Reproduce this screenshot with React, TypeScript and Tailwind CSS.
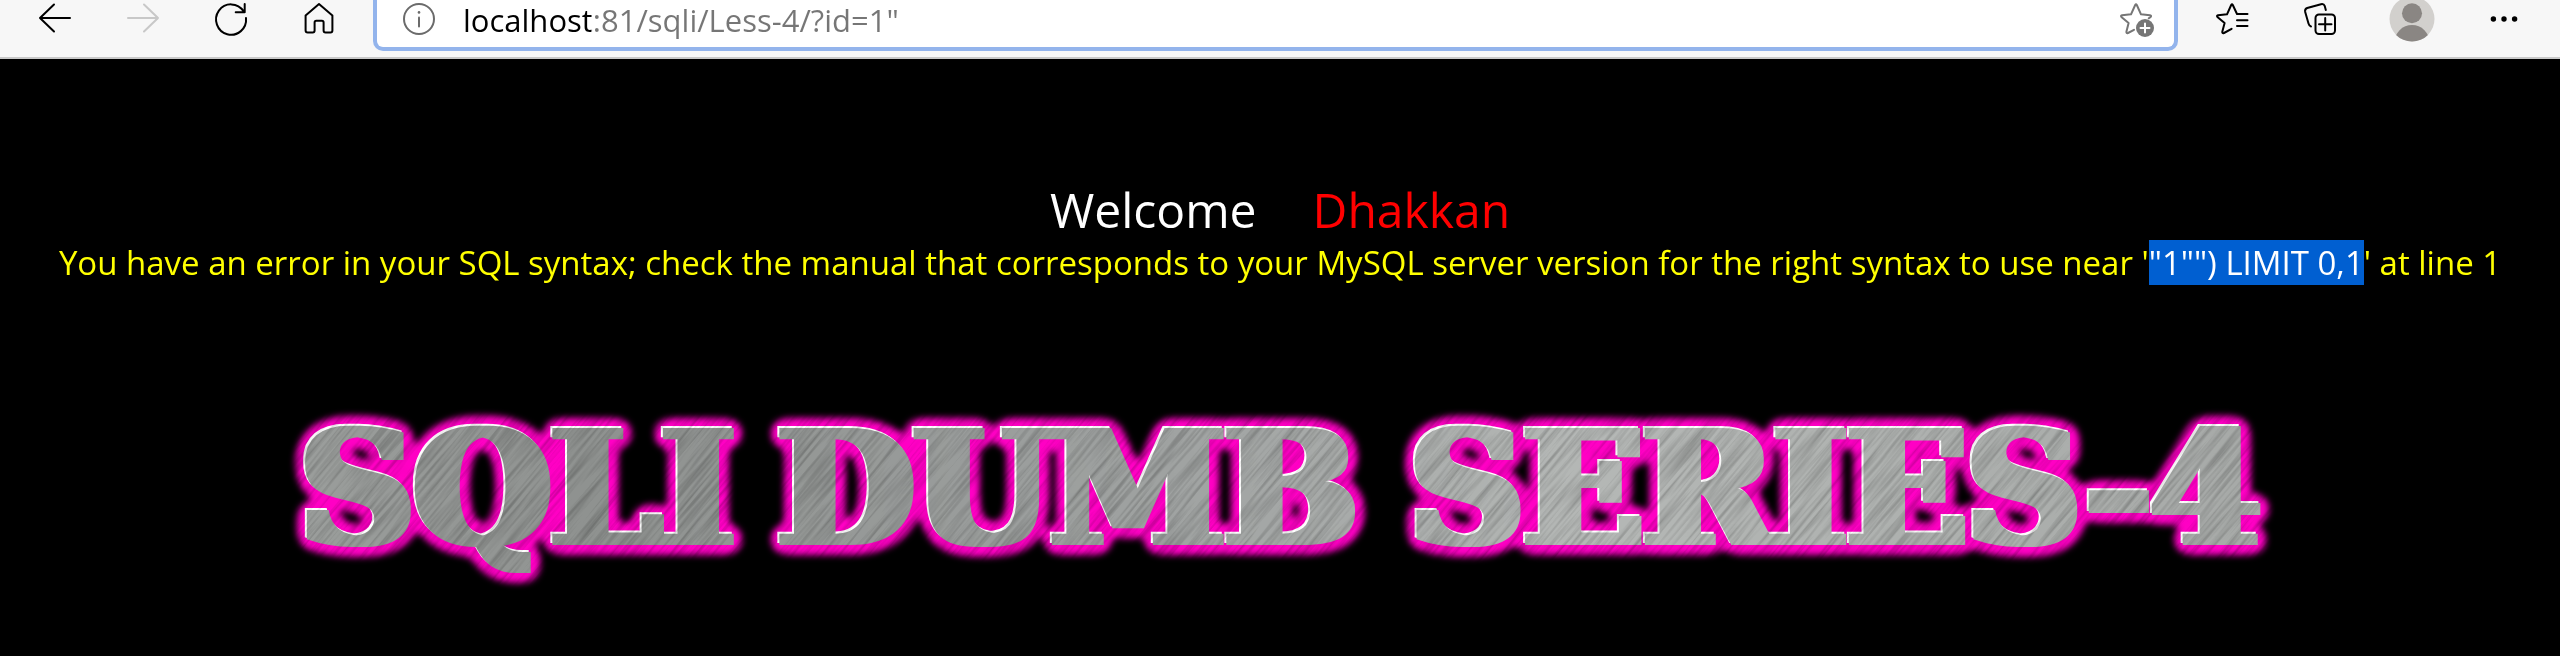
import type { ReactNode } from "react";

function ToolButton({ label, wide, disabled, children }: { label: string; wide?: boolean; disabled?: boolean; children: ReactNode }) {
  return (
    <button
      type="button"
      aria-label={label}
      disabled={disabled}
      className={`flex h-[38px] shrink-0 items-center justify-center ${wide ? "w-24" : "w-[88px]"} ${disabled ? "text-[#c8c8c8]" : "text-black"}`}
    >
      {children}
    </button>
  );
}

function Icon({ children }: { children: ReactNode }) {
  return (
    <svg viewBox="0 0 32 32" className="size-8 shrink-0 overflow-visible" fill="none" stroke="currentColor" strokeWidth="2" strokeLinecap="round" strokeLinejoin="round" aria-hidden="true">
      {children}
    </svg>
  );
}

function Toolbar() {
  return (
    <header className="flex h-[59px] items-start overflow-hidden border-b-2 border-[#c9c9c9] bg-[#f7f7f7] pr-3 pl-[11px]">
      <nav className="flex" aria-label="Browser">
        <ToolButton label="Back">
          <Icon>
            <path d="M31 15H1M15 1.5 1 15l14 13.5" />
          </Icon>
        </ToolButton>
        <ToolButton label="Forward" disabled>
          <Icon>
            <path d="M1 15h30M17 1.5 31 15 17 28.5" />
          </Icon>
        </ToolButton>
        <ToolButton label="Refresh">
          <Icon>
            <path d="M31 15A15 15.2 0 1 1 28.6 8.2M29.7 1v8.2h-9" />
          </Icon>
        </ToolButton>
        <ToolButton label="Home">
          <Icon>
            <path d="M2.6 12.5 16 1l13.4 11.5v15q0 1.9-1.9 1.9h-5q-1.9 0-1.9-1.9v-8q0-1.7-1.7-1.7h-5.6q-1.7 0-1.7 1.7v8q0 1.9-1.9 1.9h-5q-2.1 0-2.1-1.9z" />
          </Icon>
        </ToolButton>
      </nav>

      <div className="mx-[10px] flex h-[51px] min-w-0 flex-1 items-start rounded-b-[10px] border-4 border-t-0 border-[#93b4ec] bg-white pr-[22px] pl-[26px]">
        <button type="button" aria-label="Site information" className="flex h-[38px] shrink-0 items-center text-[#6b6b6b]">
          <Icon>
            <circle cx="16" cy="16" r="15" />
            <path d="M16 14.5v9" />
            <circle cx="16" cy="9.4" r="1.3" fill="currentColor" stroke="none" />
          </Icon>
        </button>
        <input
          type="text"
          aria-label="Address"
          defaultValue={'localhost:81/sqli/Less-4/?id=1"'}
          className="ml-7 h-10 min-w-0 flex-1 bg-[linear-gradient(to_right,#000_128px,#767676_128px)] bg-clip-text font-['Open_Sans','Noto_Sans',sans-serif] text-[31px] leading-10 text-transparent outline-none"
        />
        <button type="button" aria-label="Add to favorites" className="flex h-[38px] shrink-0 items-center text-[#767676]">
          <Icon>
            <path d="M14 26.8 8 30q-1.8.6-1.6-1.3L8.6 20 1.4 14q-1-1.3.6-1.7l9-1L15.2 2q.8-1.4 1.6 0l4.2 9.3 9 1q1.8.3.7 1.7l-2 1.3" />
            <circle cx="25" cy="25" r="9" fill="currentColor" stroke="none" />
            <path d="M25 20.5v9M20.5 25h9" stroke="#fff" />
          </Icon>
        </button>
      </div>

      <nav className="flex" aria-label="Browser tools">
        <ToolButton label="Favorites">
          <Icon>
            <path d="M15.6 25.8 8 30q-2 .7-1.7-1.3L8.6 20 1.4 14q-1-1.3.6-1.7l9-1L15.2 2q.8-1.4 1.6 0l4.2 9H31.5M21 17.2h10.5M21 23h10.5" />
          </Icon>
        </ToolButton>
        <ToolButton label="Collections">
          <Icon>
            <path d="M7 23.5q-1.8-.5-2.5-3L1.2 9q-.7-3 2-4L17 1.2q2.8-.7 3.8 2L21.8 7" />
            <rect x="11.5" y="11.5" width="19.5" height="19.5" rx="3.5" />
            <path d="M21.2 15v12.5M15 21.2h12.5" />
          </Icon>
        </ToolButton>
        <ToolButton label="Profile" wide>
          <svg viewBox="0 0 46 46" className="size-[46px] shrink-0" aria-hidden="true">
            <clipPath id="avatar">
              <circle cx="23" cy="23" r="22.5" />
            </clipPath>
            <g clipPath="url(#avatar)">
              <rect width="46" height="46" fill="#d2d0cd" />
              <circle cx="23" cy="17.3" r="10" fill="#8a8683" />
              <circle cx="23" cy="46.5" r="17.5" fill="#8a8683" />
            </g>
          </svg>
        </ToolButton>
        <ToolButton label="Settings and more">
          <Icon>
            <g fill="currentColor" stroke="none">
              <circle cx="5.4" cy="16" r="2.7" />
              <circle cx="16" cy="16" r="2.7" />
              <circle cx="26.6" cy="16" r="2.7" />
            </g>
          </Icon>
        </ToolButton>
      </nav>
    </header>
  );
}

function Banner() {
  return (
    <svg viewBox="0 0 2060 220" className="mt-[100px] w-[80.5%] max-w-full" role="img" aria-label="SQLI DUMB SERIES-4">
      <defs>
        <linearGradient id="steel" gradientUnits="userSpaceOnUse" x1="0" x2="2060" y1="0" y2="0">
          <stop offset="0" stopColor="#9c9f9d" />
          <stop offset=".17" stopColor="#8e918f" />
          <stop offset=".45" stopColor="#9fa2a1" />
          <stop offset=".65" stopColor="#b4b7b5" />
          <stop offset="1" stopColor="#a5a8a6" />
        </linearGradient>
        <filter id="metal" filterUnits="userSpaceOnUse" x="0" y="0" width="2060" height="220" colorInterpolationFilters="sRGB">
          <feMorphology in="SourceAlpha" operator="dilate" radius="6 1" result="bold" />
          <feGaussianBlur in="bold" stdDeviation="7" />
          <feComponentTransfer>
            <feFuncA type="linear" slope="24" intercept="-1" />
          </feComponentTransfer>
          <feGaussianBlur stdDeviation="3" result="halo" />
          <feFlood floodColor="#ff00c4" />
          <feComposite in2="halo" operator="in" result="glow" />
          <feOffset in="bold" dx="-2" dy="-2" result="edge" />
          <feFlood floodColor="#ffffff" />
          <feComposite in2="edge" operator="in" result="shine" />
          <feMorphology in="SourceGraphic" operator="dilate" radius="6 1" result="face" />
          <feMerge>
            <feMergeNode in="glow" />
            <feMergeNode in="shine" />
            <feMergeNode in="face" />
          </feMerge>
        </filter>
        <filter id="grain" x="0" y="0" width="100%" height="100%" colorInterpolationFilters="sRGB">
          <feTurbulence type="fractalNoise" baseFrequency="0.012 0.3" numOctaves="2" seed="4" />
          <feColorMatrix values="0.5 0 0 0 0.7  0.5 0 0 0 0.7  0.5 0 0 0 0.7  0 0 0 0 1" />
        </filter>
      </defs>
      <text y="160" textAnchor="middle" fill="url(#steel)" filter="url(#metal)" className="font-['DejaVu_Serif',serif] text-[157px] font-bold">
        <tspan x="295">SQLI</tspan> <tspan x="845">DUMB</tspan> <tspan x="1585">SERIES-4</tspan>
      </text>
      <g className="mix-blend-multiply">
        <rect x="-300" y="-100" width="1800" height="2000" transform="rotate(-50)" filter="url(#grain)" />
      </g>
    </svg>
  );
}

export default function App() {
  return (
    <div className="flex min-h-screen flex-col bg-black font-['Open_Sans','Noto_Sans',sans-serif]">
      <Toolbar />
      <main className="flex flex-1 flex-col items-center pt-[119px]">
        <h1 className="flex gap-14 text-[48px] leading-[64px] text-white">
          <span>Welcome</span>
          <span className="text-[#ff0000]">Dhakkan</span>
        </h1>
        <p className="text-[33px] leading-[42px] whitespace-nowrap text-[#ffff00]">
          You have an error in your SQL syntax; check the manual that corresponds to your MySQL server version for the right syntax to use near '
          <mark className="bg-[#005fd1] text-white">"1"") LIMIT 0,1</mark>' at line 1
        </p>
        <Banner />
      </main>
    </div>
  );
}
